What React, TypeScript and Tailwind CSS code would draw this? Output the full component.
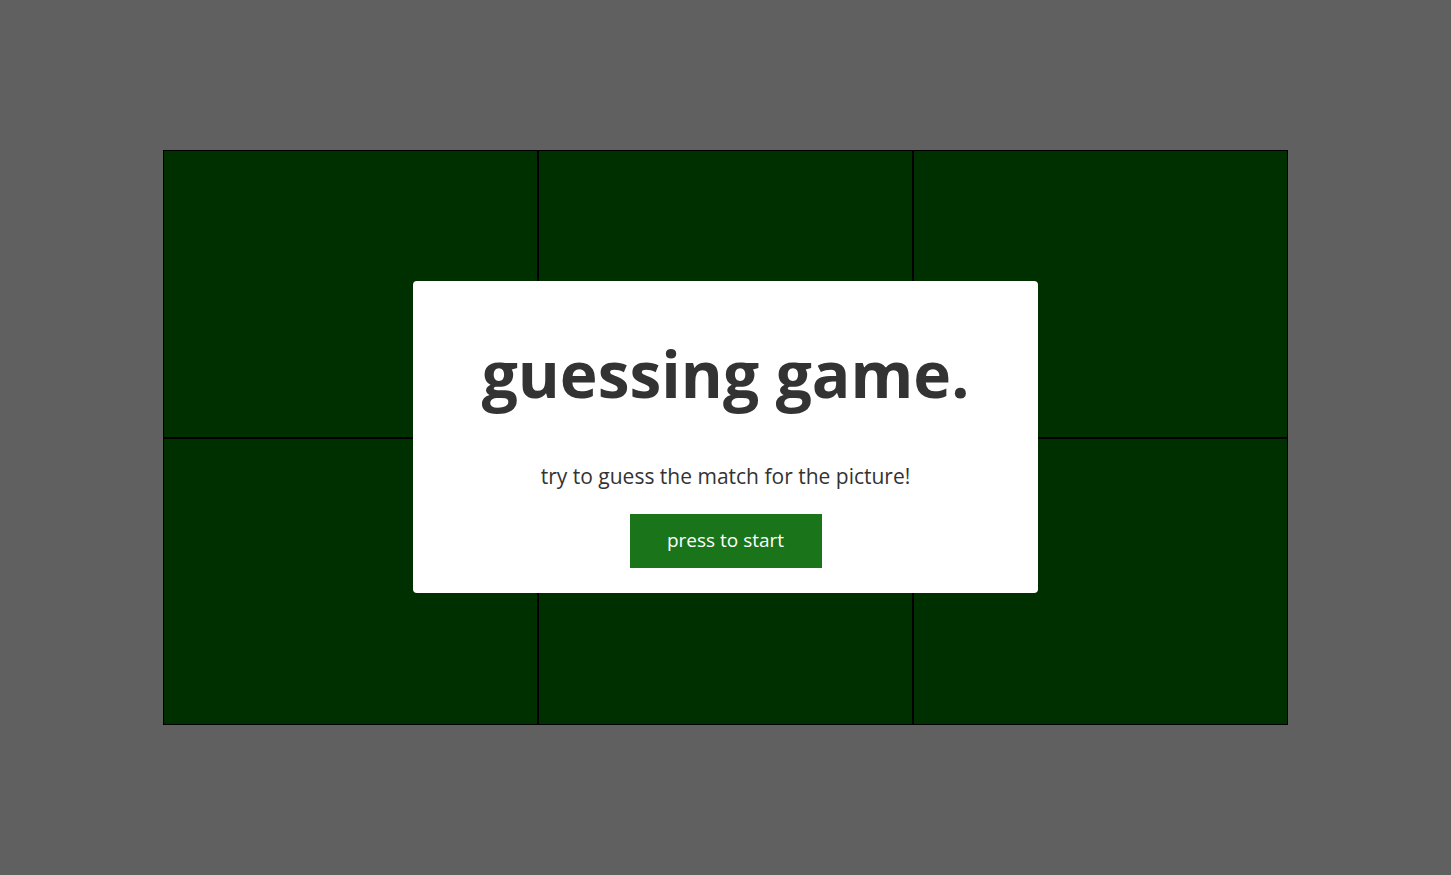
export default function App() {
  const cells = [0, 1, 2, 3, 4, 5];
  return (
    <div className="flex h-screen w-full items-center justify-center bg-[#606060] font-['Open_Sans',sans-serif]">
      <div className="relative">
        <div className="grid w-[1125px] grid-cols-3">
          {cells.map((c) => (
            <div key={c} className="h-[287.5px] border border-black bg-[#003000]" />
          ))}
        </div>
        <div className="absolute inset-0 flex items-center justify-center">
          <div className="mb-[2px] flex h-[312px] w-[625px] flex-col items-center rounded bg-white pt-[55px] text-[#333333]">
            <h1 className="text-[64px] font-bold leading-[76px]">guessing game.</h1>
            <p className="mt-[50px] text-[21px] leading-[28px]">try to guess the match for the picture!</p>
            <button className="mt-[24px] h-[54px] w-[192px] bg-[#1a741a] text-[19px] text-white">
              press to start
            </button>
          </div>
        </div>
      </div>
    </div>
  );
}
